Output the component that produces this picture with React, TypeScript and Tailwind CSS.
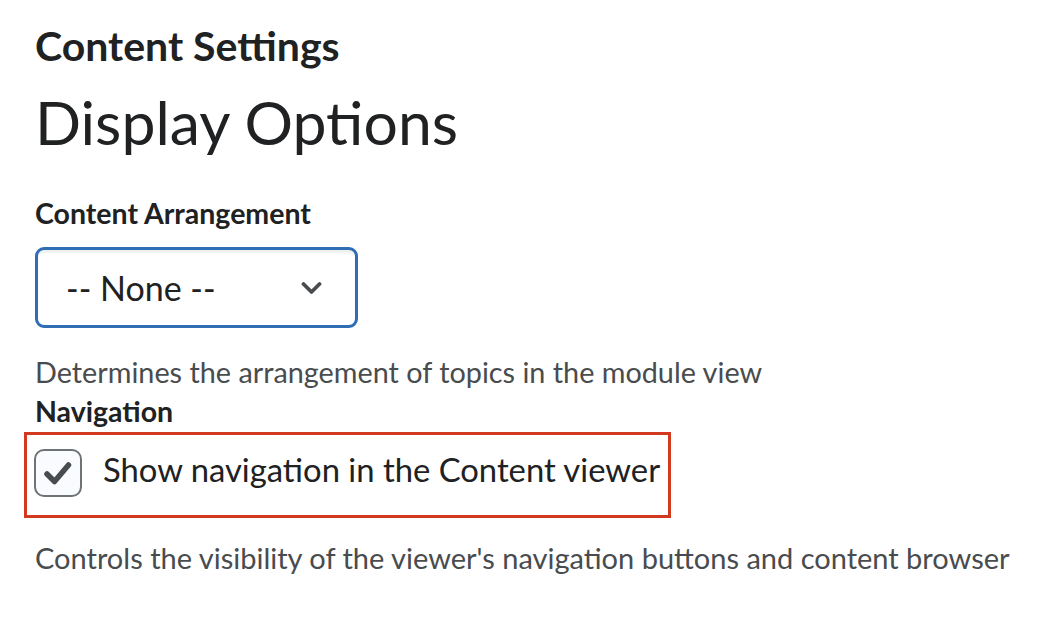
import { useState } from 'react';

export default function App() {
  const [checked, setChecked] = useState(true);

  return (
    <main className="min-h-screen bg-white pl-[35px] pt-[21px] font-['Lato','Open_Sans',sans-serif] text-[#202122]">
      <h2 className="text-[41px] font-bold leading-[50px]">Content Settings</h2>
      <h1 className="mt-[15px] text-[60.7px] leading-[72px]">Display Options</h1>

      <section className="mt-[37px]">
        <label className="block text-[28.5px] font-bold leading-[36px]">
          Content Arrangement
        </label>
        <div className="mt-[16px] flex h-[81px] w-[323px] items-center justify-between rounded-[9px] border-[3px] border-[#2f6db5] bg-white pl-[28px] pr-[33px] shadow-[inset_0_3px_2px_rgba(0,0,0,0.06)]">
          <span className="text-[34px] leading-none">-- None --</span>
          <svg width="21" height="14" viewBox="0 0 21 14" fill="none">
            <path
              d="M2.5 3l8 8 8-8"
              stroke="#494c4e"
              strokeWidth="3.8"
              strokeLinecap="round"
              strokeLinejoin="round"
            />
          </svg>
        </div>
        <p className="mt-[26px] text-[28.8px] leading-[36px] text-[#494c4e]">
          Determines the arrangement of topics in the module view
        </p>
      </section>

      <section>
        <p className="mt-[3px] text-[28.5px] font-bold leading-[36px]">Navigation</p>
        <div className="-ml-[11px] mt-[3px] w-[647px] border-[3px] border-[#d3391f] pb-[17px] pl-[7px] pt-[13px]">
          <label className="flex cursor-pointer items-center gap-[21px]">
            <button
              type="button"
              onClick={() => setChecked(!checked)}
              className="flex h-[48px] w-[48px] shrink-0 items-center justify-center rounded-[10px] border-2 border-[#6e7376] bg-[#f9fbff]"
            >
              {checked && (
                <svg width="30" height="26" viewBox="0 0 30 26" fill="none">
                  <path
                    d="M4 14l7.5 7.5L25.5 5"
                    stroke="#494c4e"
                    strokeWidth="5.5"
                    strokeLinecap="round"
                    strokeLinejoin="round"
                  />
                </svg>
              )}
            </button>
            <span className="pb-[6px] text-[32.8px] leading-[44px]">
              Show navigation in the Content viewer
            </span>
          </label>
        </div>
        <p className="mt-[22px] text-[29px] leading-[36px] text-[#494c4e]">
          Controls the visibility of the viewer's navigation buttons and content browser
        </p>
      </section>
    </main>
  );
}
